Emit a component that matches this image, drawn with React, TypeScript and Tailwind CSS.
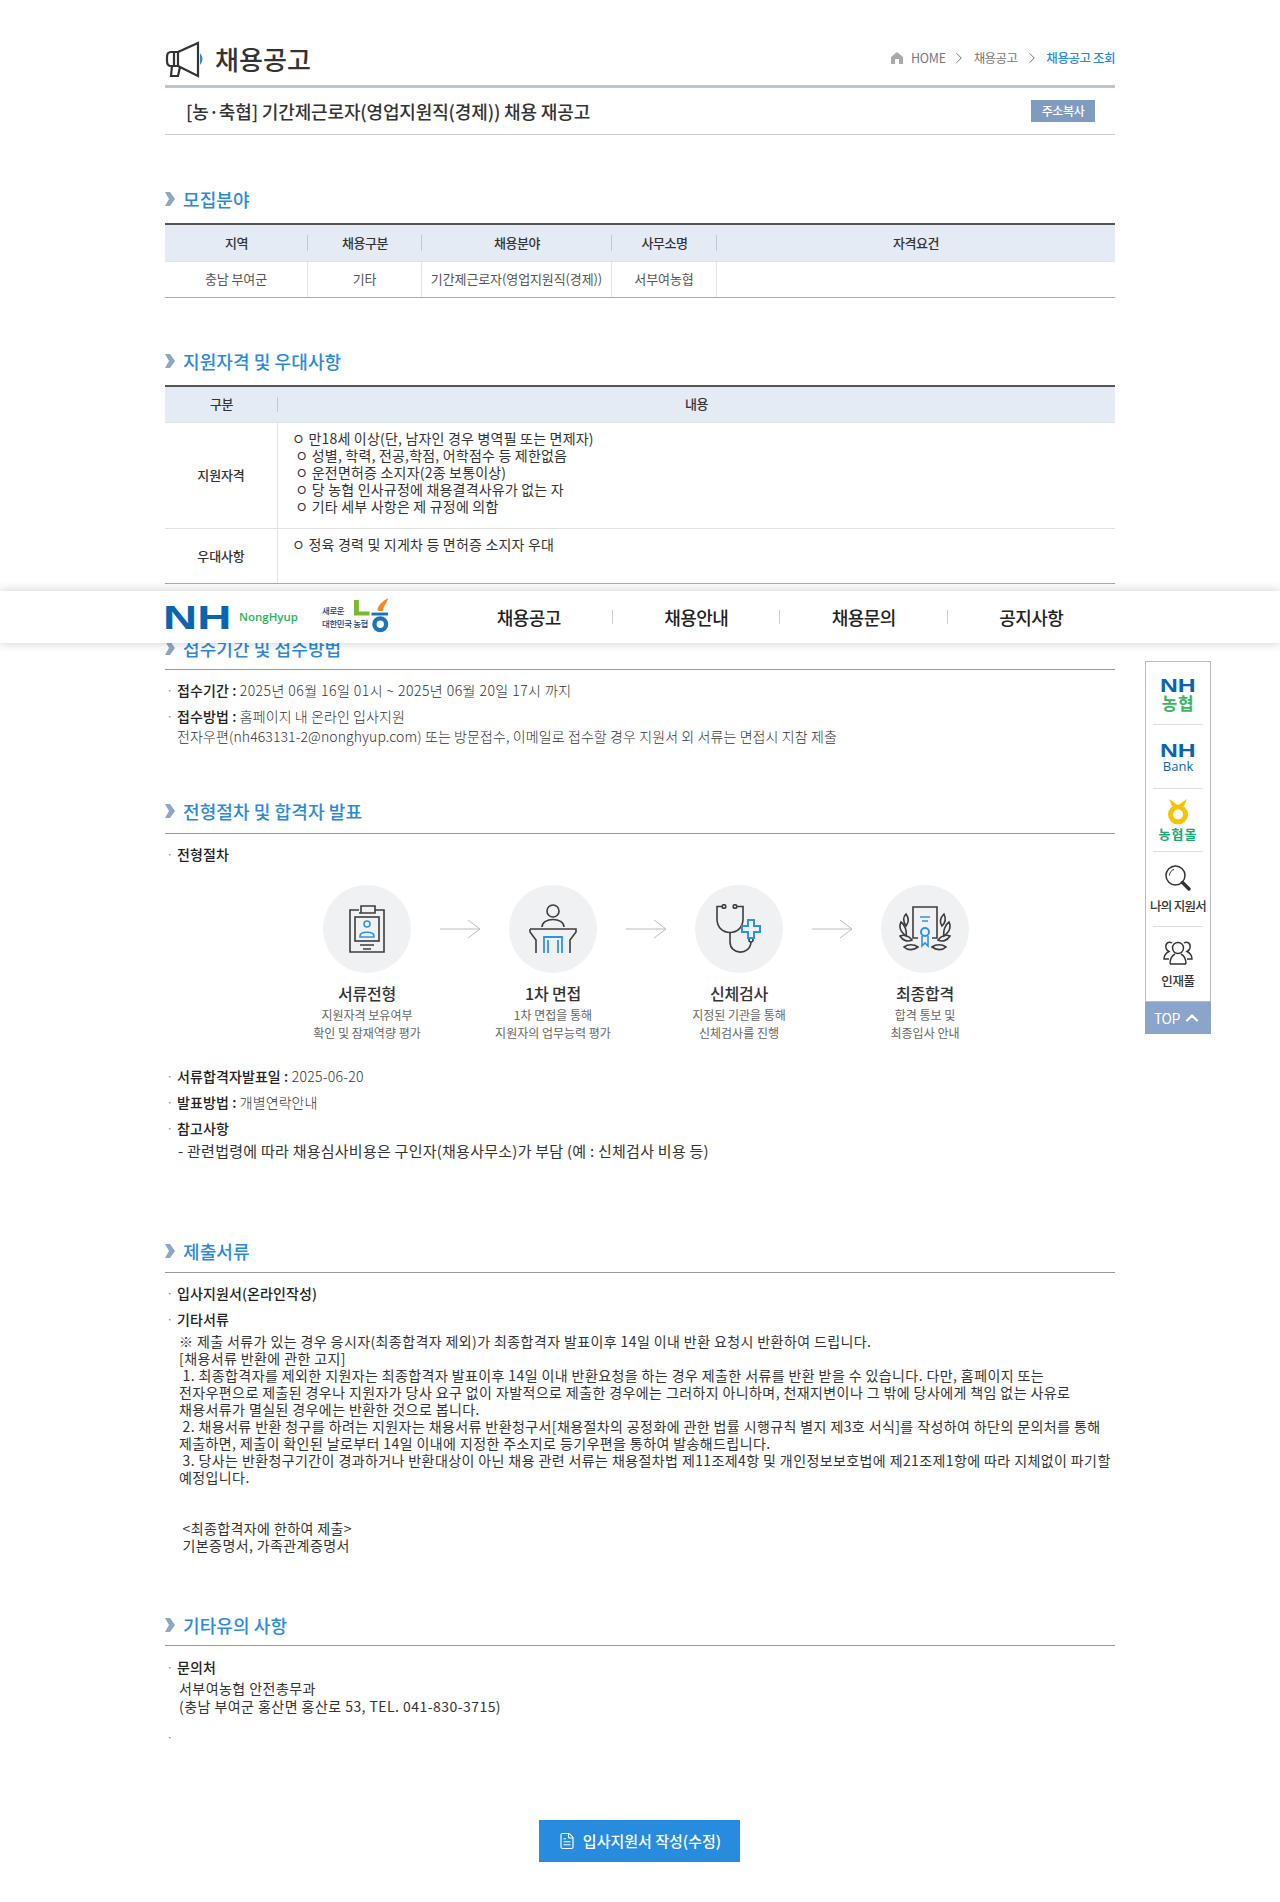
import React from 'react';
import { ChevronRight, ChevronUp, FileText } from 'lucide-react';

const font = "font-['Noto_Sans_CJK_KR','Noto_Sans',sans-serif]";

// section title with the small chevron mark
const SectionTitle: React.FC<{ title: string; className?: string }> = ({ title, className }) => (
  <div className={`flex items-center h-[26px] ${className || ''}`}>
    <svg width="11" height="14" viewBox="0 0 11 14" className="mr-[7px]">
      <path d="M0 0 H5 L10 7 L5 14 H0 L4 7 Z" fill="#8fa6c6" />
    </svg>
    <h2 className="text-[18px] font-medium text-[#2a8ad8] tracking-[0.1px] leading-[26px]">{title}</h2>
  </div>
);

const Bullet: React.FC<{ children: React.ReactNode; className?: string }> = ({ children, className }) => (
  <div className={`flex text-[14px] font-light leading-[20px] text-[#333] tracking-[0.1px] ${className || ''}`}>
    <span className="w-[12px] pl-[1px] text-[#777]">·</span>
    <div>{children}</div>
  </div>
);

const steps = [
  { title: '서류전형', l1: '지원자격 보유여부', l2: '확인 및 잠재역량 평가', icon: 'doc' },
  { title: '1차 면접', l1: '1차 면접을 통해', l2: '지원자의 업무능력 평가', icon: 'desk' },
  { title: '신체검사', l1: '지정된 기관을 통해', l2: '신체검사를 진행', icon: 'med' },
  { title: '최종합격', l1: '합격 통보 및', l2: '최종입사 안내', icon: 'cert' },
];

const StepIcon: React.FC<{ type: string }> = ({ type }) => {
  const dark = '#3d3d3d';
  const blue = '#2f93e4';
  if (type === 'doc') {
    return (
      <svg width="40" height="48" viewBox="0 0 40 48" fill="none" strokeWidth="1.6">
        <path d="M12 5 H3 V47 H37 V5 H28" stroke={dark} />
        <path d="M12 8 H28 V1 H14 V8" stroke={dark} />
        <rect x="8" y="12" width="24" height="24" stroke={dark} />
        <circle cx="20" cy="19" r="3" stroke={blue} />
        <path d="M13 31 C13 26 27 26 27 31 V32 H13 Z" stroke={blue} />
        <path d="M13 40 H27 M16 44 H24" stroke={dark} />
      </svg>
    );
  }
  if (type === 'desk') {
    return (
      <svg width="48" height="50" viewBox="0 0 48 50" fill="none" strokeWidth="1.6">
        <circle cx="24" cy="7" r="6" stroke={dark} />
        <path d="M13 23 C13 13 35 13 35 23" stroke={dark} />
        <path d="M1 25 H47 V28 L41 36 V49 M1 25 V28 L7 36 V49" stroke={dark} />
        <path d="M15 49 V33 H33 V49 M19 49 V36 M29 49 V36" stroke={blue} strokeWidth="1.8" />
      </svg>
    );
  }
  if (type === 'med') {
    return (
      <svg width="46" height="50" viewBox="0 0 46 50" fill="none" strokeWidth="1.6">
        <circle cx="8" cy="2.5" r="1.8" stroke={dark} />
        <circle cx="19" cy="2.5" r="1.8" stroke={dark} />
        <path d="M6 2.5 H1 V15 C1 33 27 33 27 15 V2.5 H21" stroke={dark} />
        <path d="M14 28 V38 C14 51 34 52 35 38" stroke={dark} />
        <circle cx="35" cy="36" r="2" stroke={dark} />
        <path d="M32 16 H38 V22 H44 V28 H38 V34 H32 V28 H26 V22 H32 Z" stroke={blue} strokeWidth="2" />
      </svg>
    );
  }
  return (
    <svg width="54" height="46" viewBox="0 0 54 46" fill="none" strokeWidth="1.6">
      <path d="M20 32 H15 V1 H39 V32 H34" stroke={dark} />
      <path d="M22 11 H32 M24 15 H30" stroke={blue} />
      <circle cx="27" cy="26" r="4" stroke={blue} strokeWidth="2" />
      <path d="M24 30 V40 L27 37 L30 40 V30" stroke={blue} />
      <path d="M8 20 C4 14 6 10 8 8 C11 12 11 16 8 20 Z M44 20 C40 14 44 10 46 8 C48 12 48 16 44 20 Z" stroke={dark} />
      <path d="M3 16 C0 22 3 26 8 30 C9 25 7 19 3 16 Z M51 16 C54 22 51 26 46 30 C45 25 47 19 51 16 Z" stroke={dark} />
      <path d="M2 30 C5 35 10 36 14 34 C11 30 6 28 2 30 Z M52 30 C49 35 44 36 40 34 C43 30 48 28 52 30 Z" stroke={dark} />
      <path d="M6 41 C10 45 16 44 20 41 C16 38 10 38 6 41 Z M48 41 C44 45 38 44 34 41 C38 38 44 38 48 41 Z" stroke={dark} />
    </svg>
  );
};

const Arrow = () => (
  <svg width="40" height="20" viewBox="0 0 40 20" fill="none" stroke="#bdbdbd" strokeWidth="1" className="absolute left-[166px] top-[34px]">
    <path d="M0 10 H40 M28 1 L40 10 L28 19" />
  </svg>
);

const cellHead = 'flex items-center justify-center relative pb-[1px] text-[13px] font-medium text-[#333] tracking-[-0.5px]';
const sepHead = "after:content-[''] after:absolute after:right-0 after:top-[10px] after:bottom-[10px] after:w-px after:bg-[#bfc8d4]";
const cellBody = 'flex items-center justify-center pb-[1px] border-r border-[#e2e2e2] text-[13px] text-[#555] tracking-[-0.1px]';

export default function App() {
  return (
    <div className={`relative w-[1280px] h-[1902px] bg-white overflow-hidden ${font}`}>
      <div className="w-[950px] ml-[165px]">
        {/* page title */}
        <div className="flex justify-between h-[88px] border-b-[3px] border-[#bcc3d3] pt-[40px]">
          <div className="flex items-center h-[38px]">
            <svg width="40" height="37" viewBox="0 0 40 37" fill="none" stroke="#333" strokeWidth="2.2">
              <path d="M13 11 L33 2 V35 L13 25" />
              <path d="M13 11 H6 Q2 11 2 16 V20 Q2 25 6 25 H13 Z M9 11 V25" />
              <path d="M7 25 L6 35 H13 L15 26" />
              <path d="M35 12 Q40 18 35 24 Z" fill="#2a8ad8" stroke="none" />
            </svg>
            <h1 className="text-[26px] font-medium text-[#333] tracking-[0.1px] ml-[10px] leading-[38px]">채용공고</h1>
          </div>
          <div className="flex items-center h-[18px] mt-[9px] text-[12.5px] text-[#777] tracking-[-0.3px]">
            <svg width="12" height="12" viewBox="0 0 12 12" fill="#aaa">
              <path d="M6 0 L12 5 V12 H8 V7 H4 V12 H0 V5 Z" />
            </svg>
            <span className="ml-[8px]">HOME</span>
            <ChevronRight size={18} strokeWidth={1.1} className="ml-[4px] mr-[6px] text-[#555]" />
            <span className="tracking-[-0.6px]">채용공고</span>
            <ChevronRight size={18} strokeWidth={1.1} className="ml-[6px] mr-[5px] text-[#555]" />
            <span className="text-[#2a8ad8] font-medium tracking-[-0.45px]">채용공고 조회</span>
          </div>
        </div>

        <div className="flex items-center justify-between h-[47px] border-b border-[#cccccc] pl-[21px] pr-[20px]">
          <h2 className="text-[18px] font-medium text-[#333] tracking-[-0.15px]">[농·축협] 기간제근로자(영업지원직(경제)) 채용 재공고</h2>
          <button className="w-[64px] h-[22px] bg-[#7f9bc0] text-white text-[12px] font-medium tracking-[-0.4px]">주소복사</button>
        </div>

        {/* recruit field */}
        <SectionTitle title="모집분야" className="mt-[51px]" />
        <div className="mt-[11px] border-t-2 border-[#555] border-b border-b-[#aaaaaa]">
          <div className="grid grid-cols-[143px_114px_190px_105px_398px] h-[37px] bg-[#e4ebf5] border-b border-[#dfe3e8]">
            <div className={`${cellHead} ${sepHead}`}>지역</div>
            <div className={`${cellHead} ${sepHead}`}>채용구분</div>
            <div className={`${cellHead} ${sepHead}`}>채용분야</div>
            <div className={`${cellHead} ${sepHead}`}>사무소명</div>
            <div className={cellHead}>자격요건</div>
          </div>
          <div className="grid grid-cols-[143px_114px_190px_105px_398px] h-[35px]">
            <div className={cellBody}>충남 부여군</div>
            <div className={cellBody}>기타</div>
            <div className={cellBody}>기간제근로자(영업지원직(경제))</div>
            <div className={cellBody}>서부여농협</div>
            <div />
          </div>
        </div>

        {/* qualification */}
        <SectionTitle title="지원자격 및 우대사항" className="mt-[50px]" />
        <div className="mt-[11px] border-t-2 border-[#555] border-b border-b-[#aaaaaa]">
          <div className="grid grid-cols-[113px_837px] h-[36px] bg-[#e4ebf5] border-b border-[#dfe3e8]">
            <div className={`${cellHead} ${sepHead}`}>구분</div>
            <div className={cellHead}>내용</div>
          </div>
          <div className="grid grid-cols-[113px_837px] h-[106px] border-b border-[#e2e2e2]">
            <div className={`${cellBody} font-medium !text-[#333]`}>지원자격</div>
            <div className="pl-[14px] pt-[7px] text-[14px] leading-[17px] text-[#333] tracking-[0.2px] whitespace-pre">{`ㅇ 만18세 이상(단, 남자인 경우 병역필 또는 면제자)
 ㅇ 성별, 학력, 전공,학점, 어학점수 등 제한없음
 ㅇ 운전면허증 소지자(2종 보통이상)
 ㅇ 당 농협 인사규정에 채용결격사유가 없는 자
 ㅇ 기타 세부 사항은 제 규정에 의함`}</div>
          </div>
          <div className="grid grid-cols-[113px_837px] h-[54px]">
            <div className={`${cellBody} font-medium !text-[#333]`}>우대사항</div>
            <div className="pl-[14px] pt-[7px] text-[14px] leading-[17px] text-[#333] tracking-[0.2px]">ㅇ 정육 경력 및 지게차 등 면허증 소지자 우대</div>
          </div>
        </div>

        {/* period */}
        <SectionTitle title="접수기간 및 접수방법" className="mt-[51px]" />
        <div className="mt-[8px] border-t border-[#999] pt-[10px]">
          <Bullet><b className="font-medium text-[#222]">접수기간 : </b><span className="tracking-[0.45px]">2025년 06월 16일 01시 ~ 2025년 06월 20일 17시 까지</span></Bullet>
          <Bullet className="mt-[6px]">
            <b className="font-medium text-[#222]">접수방법 : </b>홈페이지 내 온라인 입사지원<br />
            전자우편(nh463131-2@nonghyup.com) 또는 방문접수, 이메일로 접수할 경우 지원서 외 서류는 면접시 지참 제출
          </Bullet>
        </div>

        {/* process */}
        <SectionTitle title="전형절차 및 합격자 발표" className="mt-[52px]" />
        <div className="mt-[9px] border-t border-[#999] pt-[10px]">
          <Bullet><b className="font-medium text-[#222]">전형절차</b></Bullet>
          <div className="flex pl-[109px] mt-[21px] h-[166px]">
            {steps.map((s, i) => (
              <div key={s.title} className="relative w-[186px] flex flex-col items-center">
                <div className="w-[88px] h-[88px] rounded-full bg-[#f0f1f3] flex items-center justify-center">
                  <StepIcon type={s.icon} />
                </div>
                {i < 3 && <Arrow />}
                <div className="mt-[8px] text-[16px] font-medium text-[#333] leading-[24px] tracking-[-0.2px]">{s.title}</div>
                <div className="mt-[1px] text-[12px] text-[#666] leading-[18px] text-center">{s.l1}<br />{s.l2}</div>
              </div>
            ))}
          </div>
          <Bullet className="mt-[15px]"><b className="font-medium text-[#222]">서류합격자발표일 : </b><span className="tracking-[0.3px]">2025-06-20</span></Bullet>
          <Bullet className="mt-[6px]"><b className="font-medium text-[#222]">발표방법 : </b>개별연락안내</Bullet>
          <Bullet className="mt-[6px]"><b className="font-medium text-[#222]">참고사항</b></Bullet>
          <div className="pl-[13px] mt-[3px] text-[15px] leading-[20px] text-[#333] tracking-[0.25px]">- 관련법령에 따라 채용심사비용은 구인자(채용사무소)가 부담 (예 : 신체검사 비용 등)</div>
        </div>

        {/* documents */}
        <SectionTitle title="제출서류" className="mt-[77px]" />
        <div className="mt-[8px] border-t border-[#999] pt-[10px]">
          <Bullet><b className="font-medium text-[#222]">입사지원서(온라인작성)</b></Bullet>
          <Bullet className="mt-[6px]"><b className="font-medium text-[#222]">기타서류</b></Bullet>
          <div className="pl-[14px] mt-[4px] text-[14px] leading-[17px] text-[#333] tracking-[0.4px] whitespace-pre">{`※ 제출 서류가 있는 경우 응시자(최종합격자 제외)가 최종합격자 발표이후 14일 이내 반환 요청시 반환하여 드립니다.
[채용서류 반환에 관한 고지]
 1. 최종합격자를 제외한 지원자는 최종합격자 발표이후 14일 이내 반환요청을 하는 경우 제출한 서류를 반환 받을 수 있습니다. 다만, 홈페이지 또는
전자우편으로 제출된 경우나 지원자가 당사 요구 없이 자발적으로 제출한 경우에는 그러하지 아니하며, 천재지변이나 그 밖에 당사에게 책임 없는 사유로
채용서류가 멸실된 경우에는 반환한 것으로 봅니다.
 2. 채용서류 반환 청구를 하려는 지원자는 채용서류 반환청구서[채용절차의 공정화에 관한 법률 시행규칙 별지 제3호 서식]를 작성하여 하단의 문의처를 통해
제출하면, 제출이 확인된 날로부터 14일 이내에 지정한 주소지로 등기우편을 통하여 발송해드립니다.
 3. 당사는 반환청구기간이 경과하거나 반환대상이 아닌 채용 관련 서류는 채용절차법 제11조제4항 및 개인정보보호법에 제21조제1항에 따라 지체없이 파기할
예정입니다.


 <최종합격자에 한하여 제출>
 기본증명서, 가족관계증명서`}</div>
        </div>

        {/* etc */}
        <SectionTitle title="기타유의 사항" className="mt-[58px]" />
        <div className="mt-[7px] border-t border-[#999] pt-[11px]">
          <Bullet><b className="font-medium text-[#222]">문의처</b></Bullet>
          <div className="pl-[14px] mt-[2px] text-[14px] leading-[18px] text-[#333] tracking-[0.45px]">서부여농협 안전총무과<br />(충남 부여군 홍산면 홍산로 53, TEL. 041-830-3715)</div>
          <Bullet className="mt-[12px]"><span /></Bullet>
        </div>

        <div className="flex mt-[73px] ml-[374px]">
          <button className="flex items-center justify-center w-[201px] h-[42px] bg-[#278cdd] text-white text-[15px] font-medium">
            <FileText size={18} strokeWidth={1.5} className="mr-[7px]" />
            입사지원서 작성(수정)
          </button>
        </div>
      </div>

      {/* fixed nav overlays the page */}
      <div className="absolute left-0 top-[591px] w-full h-[52px] bg-white shadow-[0_0_10px_rgba(0,0,0,0.2)]">
        <div className="relative w-[950px] h-full ml-[165px] flex items-center">
          <div className="w-[68px] ml-[-2px] mr-[2px]">
            <span className="block origin-left scale-x-[1.39] font-['Liberation_Sans',sans-serif] font-bold text-[34px] leading-none text-[#0b64b0]">NH</span>
          </div>
          <span className="ml-[6px] font-['Open_Sans',sans-serif] font-semibold text-[11.5px] text-[#27b45c]">NongHyup</span>
          <div className="ml-[24px] text-[8.5px] font-medium leading-[13px] text-[#123f78] tracking-[-0.4px]">새로운<br />대한민국 농협</div>
          <svg width="35" height="35" viewBox="0 0 36 36" className="ml-[-14px] mt-[-4px] shrink-0">
            <path d="M0 2 H5 V14 H16 V18 H0 Z" fill="#7cb82f" />
            <path d="M35 0 C34 6 30 8 30 13 C27 14 24 13 24 12 C25 7 30 3 35 0 Z" fill="#f08a24" />
            <path d="M18 15 H35 V18 H18 Z" fill="#1c74bb" />
            <circle cx="27" cy="27" r="6" fill="none" stroke="#1c74bb" strokeWidth="4.5" />
          </svg>
          <div className="absolute left-[280px] top-0 h-full w-[670px] grid grid-cols-4">
            {['채용공고', '채용안내', '채용문의', '공지사항'].map((m, i) => (
              <div key={m} className="relative flex items-center justify-center text-[18px] font-medium text-[#222] tracking-[-0.6px]">
                {m}
                {i < 3 && <span className="absolute right-0 top-[19px] h-[14px] w-px bg-[#ccc]" />}
              </div>
            ))}
          </div>
        </div>
      </div>

      {/* quick menu */}
      <div className="absolute left-[1145px] top-[661px] w-[66px]">
        <div className="h-[341px] border border-[#bbbbbb] bg-white px-[7px] flex flex-col items-center text-center">
          <div className="w-[50px] h-[64px] border-b border-[#dddddd] flex flex-col items-center justify-center leading-none">
            <span className="block scale-x-[1.3] font-['Liberation_Sans',sans-serif] font-bold text-[19px] text-[#0b64b0]">NH</span>
            <span className="text-[17px] font-bold text-[#3cb55f] tracking-[0.5px] mt-[-1px]">농협</span>
          </div>
          <div className="w-[50px] h-[64px] border-b border-[#dddddd] flex flex-col items-center justify-center leading-none">
            <span className="block scale-x-[1.3] font-['Liberation_Sans',sans-serif] font-bold text-[19px] text-[#0b64b0]">NH</span>
            <span className="font-['Open_Sans',sans-serif] font-medium text-[13px] text-[#0b64b0]">Bank</span>
          </div>
          <div className="w-[50px] h-[64px] border-b border-[#dddddd] flex flex-col items-center justify-center leading-none">
            <svg width="22" height="26" viewBox="0 0 22 26" fill="none">
              <path d="M2 0 L8 4 L11 7 L14 4 L20 0 L17 7 H5 Z" fill="#f8c300" />
              <circle cx="11" cy="15.5" r="7.5" stroke="#f8c300" strokeWidth="5" />
            </svg>
            <span className="text-[13px] font-bold text-[#17a97a] tracking-[1px] mt-[2px]">농협몰</span>
          </div>
          <div className="w-[50px] h-[75px] border-b border-[#dddddd] flex flex-col items-center pt-[13px]">
            <svg width="26" height="26" viewBox="0 0 26 26" fill="none" stroke="#333">
              <circle cx="10.5" cy="10.5" r="9.5" strokeWidth="1.5" />
              <path d="M4.5 10.5 C4.5 7.5 6.5 5 9 4.5" strokeWidth="1" />
              <path d="M17.5 17.5 L24 24" strokeWidth="3.4" strokeLinecap="round" />
            </svg>
            <span className="text-[12.5px] text-[#333] tracking-[-0.7px] mt-[7px] leading-[16px] whitespace-nowrap font-medium">나의 지원서</span>
          </div>
          <div className="w-[50px] h-[75px] flex flex-col items-center pt-[13px]">
            <svg width="30" height="25" viewBox="0 0 30 25" fill="none" stroke="#333" strokeWidth="1.4">
              <circle cx="15" cy="8" r="5.5" />
              <path d="M7 24 C7 17 10 15 12 14 M23 24 C23 17 20 15 18 14 M7 24 H23" />
              <path d="M9 3 C6 1 2 3 3 8 C3.5 10 5 11 6 11.5 C3 13 1 15 1 19 H6 M21 3 C24 1 28 3 27 8 C26.5 10 25 11 24 11.5 C27 13 29 15 29 19 H24" />
            </svg>
            <span className="text-[12.5px] text-[#333] tracking-[-0.3px] mt-[8px] leading-[16px] font-medium">인재풀</span>
          </div>
        </div>
        <div className="h-[32px] bg-[#8aa5c9] text-white text-[14px] tracking-[-0.5px] flex items-center justify-center">
          TOP <ChevronUp size={20} strokeWidth={2.6} className="ml-[2px]" />
        </div>
      </div>
    </div>
  );
}
